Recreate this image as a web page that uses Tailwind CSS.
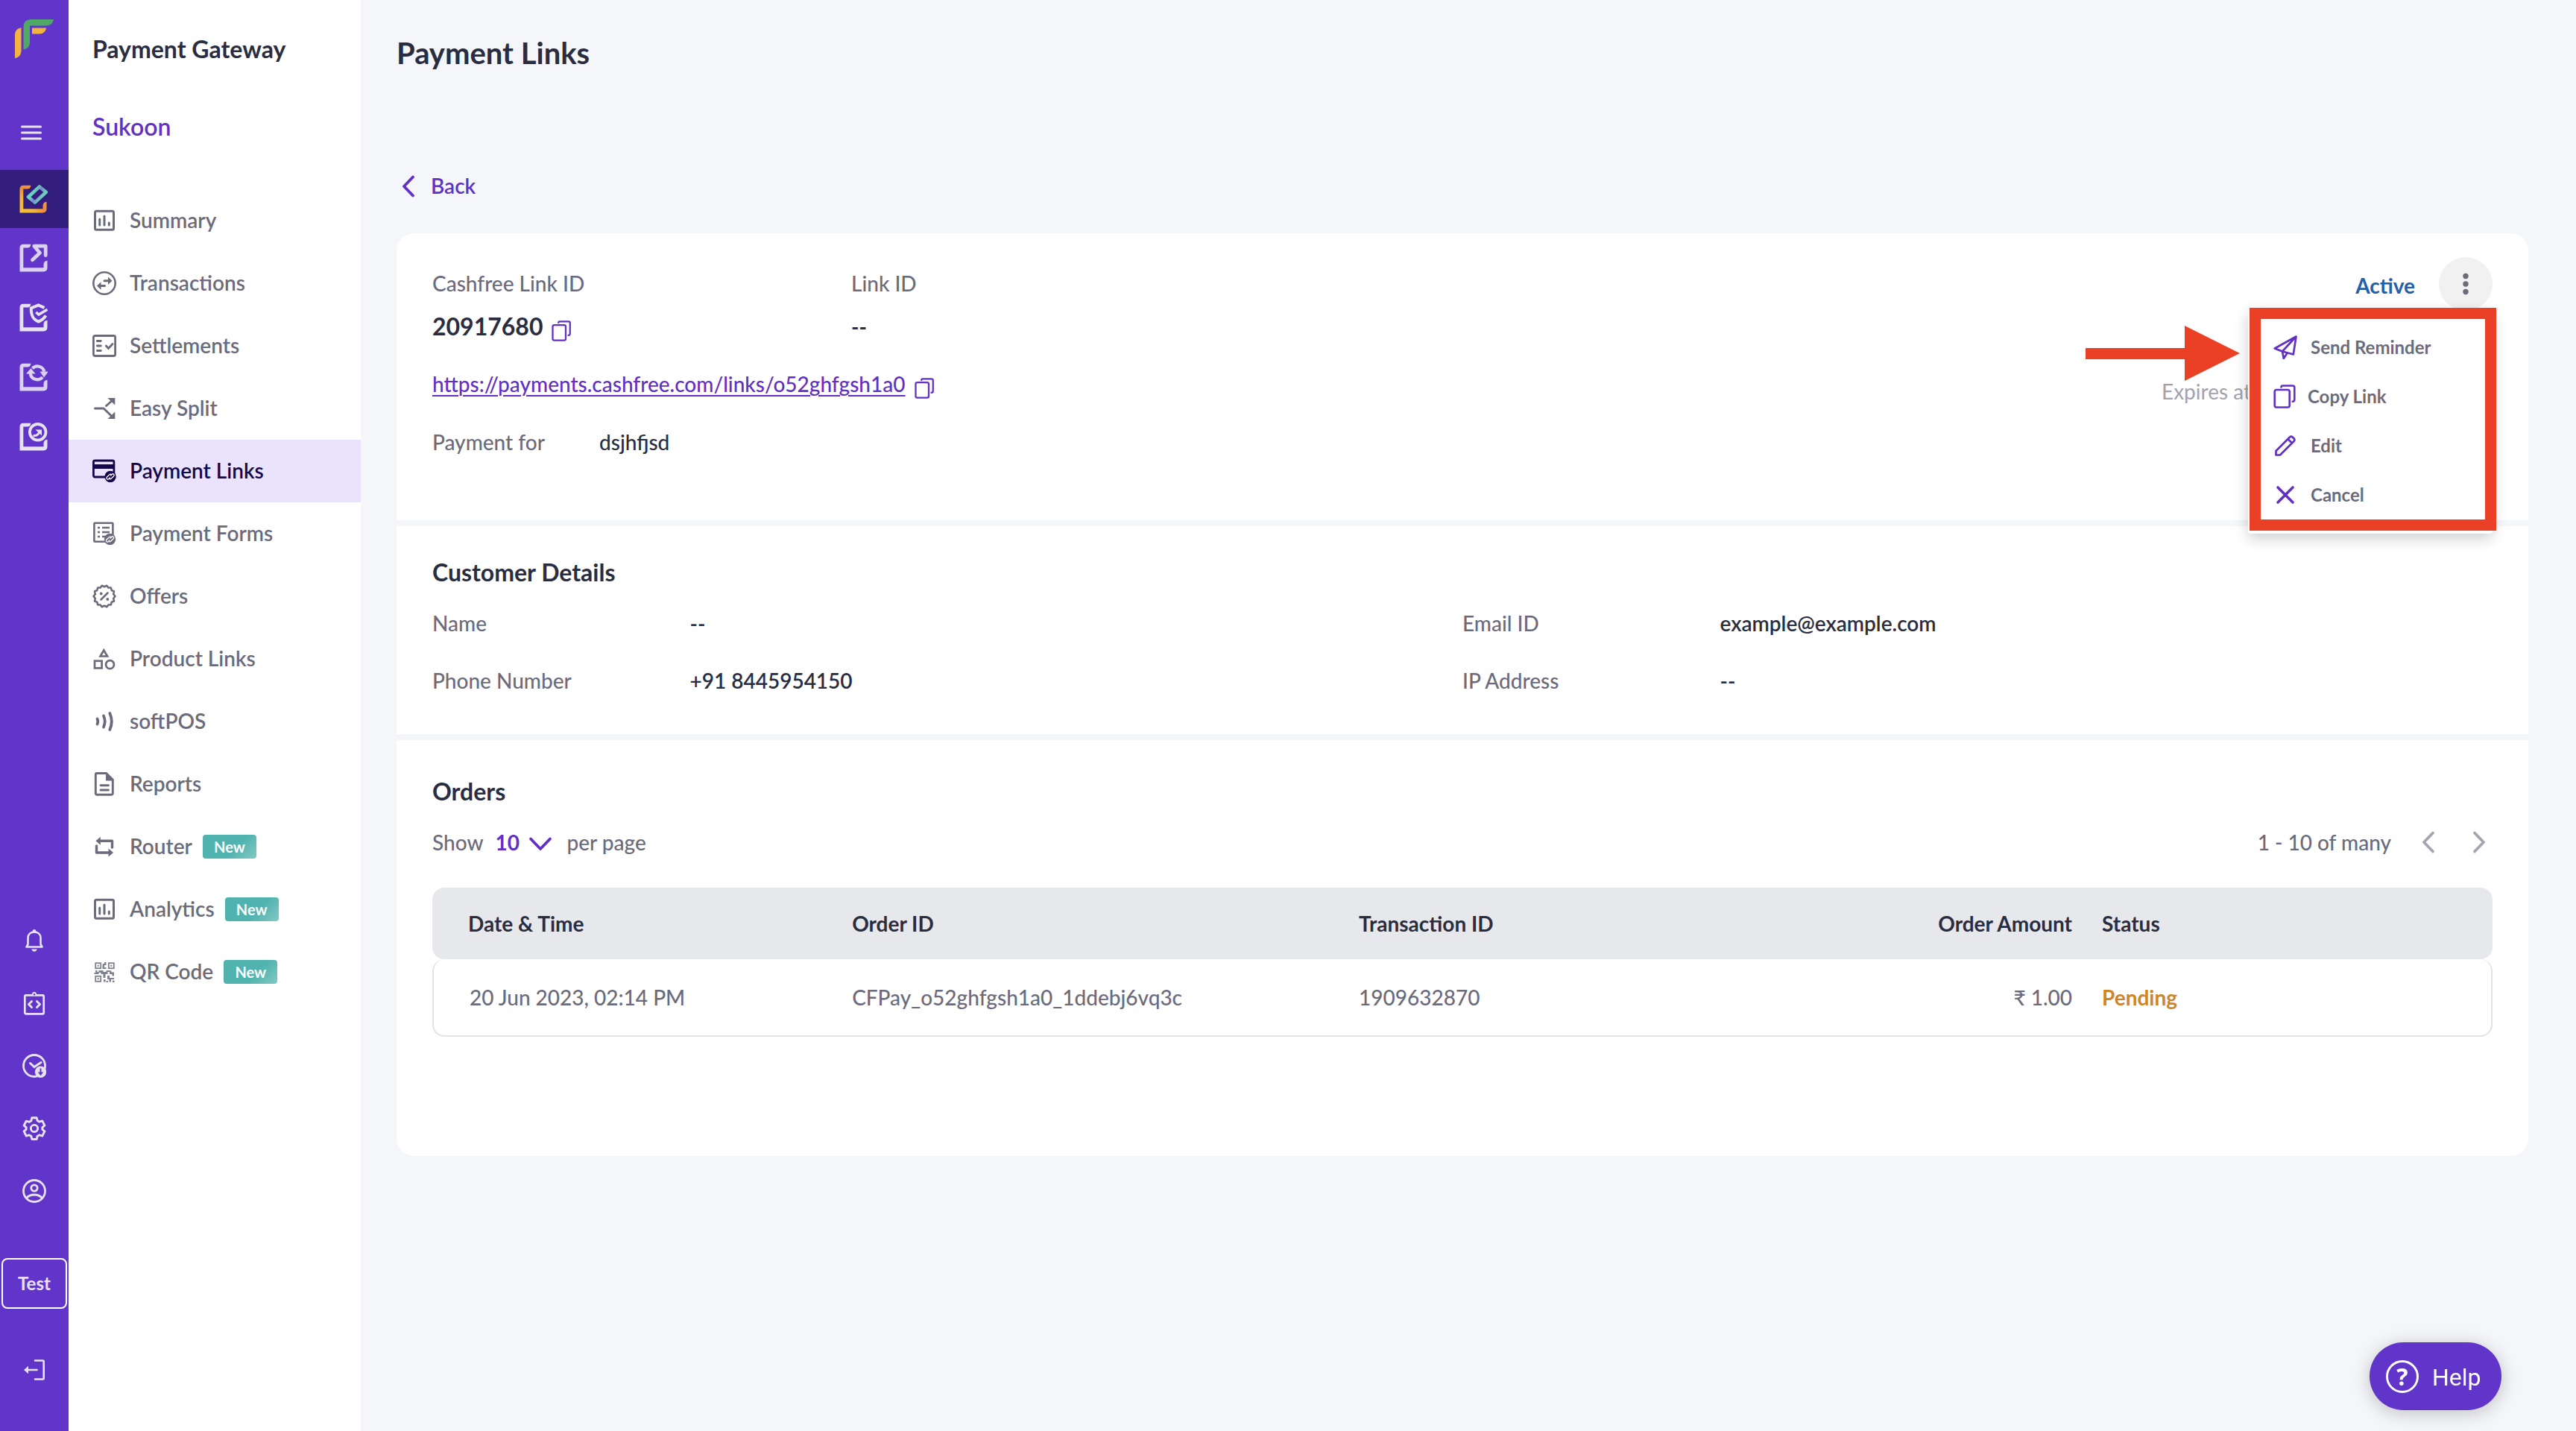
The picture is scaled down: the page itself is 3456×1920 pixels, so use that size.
<!DOCTYPE html>
<html lang="en">
<head>
<meta charset="utf-8">
<meta name="viewport" content="width=device-width, initial-scale=1">
<title>Payment Links</title>
<script src="https://cdn.jsdelivr.net/npm/@tailwindcss/browser@4"></script>
</head>
<body class="font-['Lato',sans-serif] text-[28px] leading-8 font-medium text-[#6b6b7b] bg-[#f4f6fa]">

<!-- Shared symbols -->
<svg class="hidden" aria-hidden="true">
  <symbol id="frame" viewBox="0 0 38 38"><path fill="currentColor" d="M.5 37.5V5.500C.5 2.500 2.300.7 5.200.7H15.300C15 4 13.500 5.500 10.500 5.500H5.300V32.300H32.500V28c0-3 1.800-5 5-5.200V32.300c0 3.200-1.700 5.200-5 5.200Z"/></symbol>
  <symbol id="chart" viewBox="0 0 32 32"><g fill="none" stroke="currentColor" stroke-width="3" stroke-linecap="round"><rect x="3.500" y="3.300" width="25" height="25" rx="2"/><path d="M9.700 14v8M16 10v12M22.300 19v3"/></g></symbol>
  <symbol id="linkbadge" viewBox="0 0 16 16"><circle cx="8" cy="8" r="7.700" fill="currentColor"/><g fill="none" stroke="#fff" stroke-width="1.300" stroke-linecap="round"><path d="M7.300 9.500 5.700 11.200a1.700 1.700 0 0 1-2.400-2.400L7 5.200a1.700 1.700 0 0 1 2.400 0" /><path d="M8.700 6.500 10.300 4.800a1.700 1.700 0 0 1 2.400 2.400L9 10.800a1.700 1.700 0 0 1-2.400 0"/></g></symbol>
  <symbol id="copy" viewBox="0 0 32 32"><g fill="none" stroke="currentColor" stroke-width="2.600" stroke-linecap="round" stroke-linejoin="round"><rect x="1.700" y="7" width="20" height="23.500" rx="2.500"/><path d="M10.500 3.500c0-1.300.7-2 2-2H26c1.500 0 2.300.8 2.300 2.300V20c0 1.800-.8 2.600-2.500 2.800"/></g></symbol>
  <symbol id="left" viewBox="0 0 32 32"><path d="M22 3.500 10 16l12 12.500" fill="none" stroke="currentColor" stroke-width="3.800" stroke-linecap="round" stroke-linejoin="round"/></symbol>
</svg>

<div class="flex min-h-screen">

  <!-- Product rail -->
  <nav aria-label="Products" class="flex w-[92px] shrink-0 flex-col bg-[#6134ca] text-[#e6e3ee]">
    <a href="#" aria-label="Home" class="ml-5 mt-[26px] block">
      <svg class="size-[52px]" viewBox="0 0 52 52"><path fill="#4fa865" d="M11.500 40.500V10C11.500 4 15 0 21.500 0H52c-1 5-4.500 8.500-11 8.500H20V30.500c0 5.500-3 9-8.500 10Z"/><path fill="#f2b340" d="M0 52V21c0-5.500 3-9 8.500-9.700V42C8.500 47.500 5 51.500 0 52ZM23 11.500H42c-.5 4.500-4 8-9.500 8H23Z"/></svg>
    </a>
    <button aria-label="Toggle menu" class="mt-[84px] flex h-8 items-center justify-center pr-2">
      <svg class="size-8" viewBox="0 0 32 32"><path d="M3.500 8h25M3.500 16h25M3.500 24h25" stroke="currentColor" stroke-width="3" stroke-linecap="round"/></svg>
    </button>
    <div class="mt-[34px] flex flex-col">
      <a href="#" aria-label="Payment Gateway" class="flex h-[78px] items-center justify-center bg-[#321c7c] pr-[3px]">
        <svg class="size-[38px]" viewBox="0 0 38 38">
          <defs><linearGradient id="or" x1="0" y1="1" x2="1" y2="0"><stop offset="0" stop-color="#f3c33b"/><stop offset=".3" stop-color="#f1b63a"/><stop offset=".5" stop-color="#ec8a3c"/><stop offset="1" stop-color="#f3bd3b"/></linearGradient>
          <linearGradient id="gr" x1="0" y1=".2" x2="1" y2=".8"><stop offset="0" stop-color="#61dcb4"/><stop offset=".3" stop-color="#66d2b8"/><stop offset=".5" stop-color="#7d86d2"/><stop offset=".75" stop-color="#6ccdbb"/><stop offset="1" stop-color="#61dcb4"/></linearGradient></defs>
          <path fill="url(#or)" d="M.5 37.500V5.500C.5 2.500 2.300.7 5.200.7H15.300C15 4 13.500 5.500 10.500 5.500H5.300V32.300H31.500V28c0-3 1.800-5 5-5.200V32.300c0 3.200-1.700 5.200-5 5.200Z"/>
          <path fill="none" stroke="url(#gr)" stroke-width="4.600" stroke-linejoin="round" d="M27 2.500 35.800 9.800 20.800 23.600 12 16.300Z"/>
        </svg>
      </a>
      <a href="#" aria-label="Payouts" class="flex h-20 items-center justify-center pr-[3px]">
        <svg class="size-[38px] text-[#dad2ee]" viewBox="0 0 38 38"><use href="#frame"/><path d="M17.500 21.800 27.500 12.300 19.800 3.200H35.200V15.500" fill="none" stroke="currentColor" stroke-width="4.800" stroke-linecap="round" stroke-linejoin="round"/></svg>
      </a>
      <a href="#" aria-label="Verification" class="flex h-20 items-center justify-center pr-[3px]">
        <svg class="size-[38px]" viewBox="0 0 38 38"><use href="#frame"/><g fill="none" stroke="currentColor" stroke-width="4"><path d="M33.500 5.800 25.500 2.500 15.800 6.300C15.500 16 18 21.500 25.500 24.500 30 23 33 20 35.500 16.300"/><path d="M22.300 11.800 26 15 37.500 8.300" stroke-width="3.600"/></g></svg>
      </a>
      <a href="#" aria-label="Subscriptions" class="flex h-20 items-center justify-center pr-[3px]">
        <svg class="size-[38px] text-[#dad2ee]" viewBox="0 0 38 38"><use href="#frame"/><path d="M17.500 7.300A9.300 9.300 0 0 1 33.300 11.500M31 19A9.300 9.300 0 0 1 14.700 14" fill="none" stroke="currentColor" stroke-width="4.200"/><path fill="currentColor" d="M9 14.500 15.500 7l6 7.500ZM27.500 11.500H39L33 19.500Z"/></svg>
      </a>
      <a href="#" aria-label="Credit" class="flex h-20 items-center justify-center pr-[3px]">
        <svg class="size-[38px]" viewBox="0 0 38 38"><use href="#frame"/><circle cx="24.700" cy="12.800" r="10.800" fill="#6134ca" stroke="currentColor" stroke-width="3.800"/><path d="M18.500 17.500c3.500.5 6-.5 8-4" fill="none" stroke="currentColor" stroke-width="3"/><path fill="currentColor" d="M21.500 9.500h8.500v8Z"/></svg>
      </a>
    </div>

    <div class="mt-auto flex flex-col pb-10">
      <button aria-label="Notifications" class="flex h-21 items-center justify-center">
        <svg class="size-8" viewBox="0 0 32 32"><path d="M5.500 24.500h21L24.500 21V12.500C24.500 7.500 21 4.500 16 4.500S7.500 7.500 7.500 12.500V21Z" fill="none" stroke="currentColor" stroke-width="2.600" stroke-linejoin="round"/><circle cx="16" cy="3.500" r="2.400" fill="currentColor"/><path fill="currentColor" d="M12.300 27.500h7.400c-.5 2-1.800 3.200-3.700 3.200s-3.200-1.200-3.700-3.200Z"/></svg>
      </button>
      <button aria-label="Developers" class="flex h-21 items-center justify-center">
        <svg class="size-8" viewBox="0 0 32 32"><g fill="none" stroke="currentColor" stroke-linejoin="round" stroke-linecap="round"><rect x="3.300" y="5.300" width="25.400" height="25" rx="1.500" stroke-width="2.700"/><path d="M12.500 13.500 8.500 17.500l4 4M19.500 13.500 23.500 17.500l-4 4" stroke-width="3"/></g><path fill="currentColor" d="M10.500 5.500c1.500-.3 2-1 2.700-2.500 1-3 4.600-3 5.600 0 .7 1.500 1.200 2.200 2.700 2.500Z"/><circle cx="16" cy="4.300" r="1.200" fill="#6134ca"/></svg>
      </button>
      <button aria-label="Scheduled reports" class="flex h-21 items-center justify-center">
        <svg class="size-8" viewBox="0 0 32 32"><circle cx="16" cy="16" r="14.500" fill="none" stroke="currentColor" stroke-width="2.800"/><path d="M10.500 12.500 16 17.500 25 11.500" fill="none" stroke="currentColor" stroke-width="3" stroke-linecap="round"/><circle cx="24.500" cy="24.300" r="7.700" fill="currentColor"/><path d="M24.500 19.500v6" stroke="#6134ca" stroke-width="2"/><path fill="#6134ca" d="M20.800 24.500h7.400l-3.700 4.700Z"/></svg>
      </button>
      <button aria-label="Settings" class="flex h-21 items-center justify-center">
        <svg class="size-8" viewBox="1 1 22 22" fill="none" stroke="currentColor" stroke-width="2"><path stroke-linejoin="round" d="M19.430 12.980c.04-.32.07-.64.07-.98 0-.34-.03-.66-.07-.98l2.110-1.650-2.120-4.320-2.860.85c-.52-.4-1.080-.73-1.690-.98L14.200 2.200H9.800l-.67 2.870c-.61.25-1.170.59-1.690.98l-2.860-.85-2.120 4.170 2.110 1.650c-.04.32-.07.65-.07.98 0 .33.03.66.07.98l-2.110 1.650 2.120 4.320 2.860-.85c.52.4 1.080.73 1.690.98l.67 2.870h4.400l.67-2.870c.61-.25 1.170-.59 1.690-.98l2.860.85 2.120-4.320Z"/><circle cx="12" cy="12" r="3.200"/></svg>
      </button>
      <button aria-label="Profile" class="flex h-21 items-center justify-center">
        <svg class="size-8" viewBox="0 0 32 32" fill="none" stroke="currentColor" stroke-width="2.800"><circle cx="16" cy="16" r="14.500"/><circle cx="16" cy="12" r="4.200"/><path d="M5.500 25.500c2.500-3 6-4.500 10.500-4.500s8 1.500 10.500 4.500"/></svg>
      </button>
      <button class="mx-0.5 mt-12 h-17 rounded-lg border-2 border-white text-2xl font-bold text-[#e9e1fa]">Test</button>
      <button aria-label="Log out" class="mt-10 flex h-21 items-center justify-center">
        <svg class="size-8" viewBox="0 0 32 32"><path d="M17 3.500h10.500c.8 0 1.200.4 1.200 1.200v22.600c0 .8-.4 1.200-1.200 1.200H17M8 16h11.500" fill="none" stroke="currentColor" stroke-width="2.600" stroke-linecap="round"/><path fill="currentColor" d="M2 16 8 10.800v10.400Z"/></svg>
      </button>
    </div>
  </nav>

  <!-- Section menu -->
  <aside class="w-[392px] shrink-0 bg-white pt-[46px]">
    <h2 class="px-8 text-[32px] leading-10 font-bold text-[#2a2d40]">Payment Gateway</h2>
    <p class="mt-16 px-8 text-[32px] leading-10 font-semibold text-[#6230c4]">Sukoon</p>
    <nav aria-label="Payment Gateway" class="mt-16 font-semibold">
      <a href="#" class="flex h-21 items-center gap-[18px] px-8"><svg class="size-8"><use href="#chart"/></svg><span class="pb-0.5">Summary</span></a>
      <a href="#" class="flex h-21 items-center gap-[18px] px-8"><svg class="size-8" viewBox="0 0 32 32"><circle cx="16" cy="16" r="14.700" fill="none" stroke="currentColor" stroke-width="2.600"/><path d="M16 12.700h7M16.500 19.500h-7" stroke="currentColor" stroke-width="3" stroke-linecap="round"/><path fill="currentColor" d="M21 7.500 26.500 12.700 21 18ZM11.500 14.300 6 19.500l5.500 5.200Z"/></svg><span class="pb-0.5">Transactions</span></a>
      <a href="#" class="flex h-21 items-center gap-[18px] px-8"><svg class="size-8" viewBox="0 0 32 32" fill="none" stroke="currentColor" stroke-width="2.800" stroke-linecap="round"><rect x="1.400" y="2.500" width="29.200" height="27" rx="2"/><path d="M6.300 9.500h5M6.300 16h5M6.300 22.500h5M18.300 16l3.200 3.500 5.500-6"/></svg><span class="pb-0.5">Settlements</span></a>
      <a href="#" class="flex h-21 items-center gap-[18px] px-8"><svg class="size-8" viewBox="0 0 32 32"><path d="M3.500 16H15L27 27.500M18.500 12.500 27 5" fill="none" stroke="currentColor" stroke-width="3" stroke-linecap="round"/><path fill="currentColor" d="M20.500 2H30.300v9.500ZM30.300 20.500V30H20.500Z"/></svg><span class="pb-0.5">Easy Split</span></a>
      <a href="#" aria-current="page" class="flex h-21 items-center gap-[18px] bg-[#ebe3fc] px-8 text-[#14074c]"><svg class="size-8" viewBox="0 0 32 32"><rect x="1.400" y="2" width="27.500" height="22" rx="2" fill="none" stroke="currentColor" stroke-width="2.800"/><path fill="currentColor" d="M1 7h28v6H1Z"/><use href="#linkbadge" x="16" y="15.500" width="16" height="16"/></svg><span class="pb-0.5">Payment Links</span></a>
      <a href="#" class="flex h-21 items-center gap-[18px] px-8"><svg class="size-8" viewBox="0 0 32 32"><rect x="2.400" y="1.800" width="25" height="25" rx="1" fill="none" stroke="currentColor" stroke-width="2.600"/><path d="M7 8h3M7 14h3M7 20h3M13 8h10M13 14h10M13 20h10" stroke="currentColor" stroke-width="2.600"/><use href="#linkbadge" x="15.500" y="15.500" width="16" height="16"/></svg><span class="pb-0.5">Payment Forms</span></a>
      <a href="#" class="flex h-21 items-center gap-[18px] px-8"><svg class="size-8" viewBox="0 0 32 32"><path d="M30.500 16 28.200 18.800 29 22.500 25.700 24 24.800 27.500 21.300 27.500 19.300 30.200 16 28.800 12.700 30.200 10.700 27.500 7.200 27.500 6.300 24 3 22.500 3.800 18.800 1.500 16 3.800 13.200 3 9.500 6.300 8 7.200 4.500 10.700 4.500 12.700 1.800 16 3.200 19.300 1.800 21.300 4.500 24.800 4.500 25.700 8 29 9.500 28.200 13.200Z" fill="none" stroke="currentColor" stroke-width="2.600" stroke-linejoin="round"/><path d="M11.500 20.500 20.500 11.500" stroke="currentColor" stroke-width="2.600" stroke-linecap="round"/><circle cx="11.700" cy="12.500" r="1.900" fill="currentColor"/><circle cx="20.300" cy="20" r="1.900" fill="currentColor"/></svg><span class="pb-0.5">Offers</span></a>
      <a href="#" class="flex h-21 items-center gap-[18px] px-8"><svg class="size-8" viewBox="0 0 32 32" fill="none" stroke="currentColor" stroke-width="2.700"><path d="M15.300 4.500 20 12.500H10.600Z"/><rect x="3" y="18.800" width="9.600" height="9.600"/><circle cx="23.500" cy="23.700" r="5.500"/></svg><span class="pb-0.5">Product Links</span></a>
      <a href="#" class="flex h-21 items-center gap-[18px] px-8"><svg class="size-8" viewBox="0 0 32 32" fill="none" stroke="currentColor" stroke-width="3.800" stroke-linecap="round"><path d="M6.500 12.500q1.600 3.500 0 7M15 8.500q3.400 7.500 0 15M23.300 5q5 11 0 22"/></svg><span class="pb-0.5">softPOS</span></a>
      <a href="#" class="flex h-21 items-center gap-[18px] px-8"><svg class="size-8" viewBox="0 0 32 32"><path d="M6 1.500h12.500L27.300 10v18.300c0 1.300-.7 2-2 2H6.300c-1.300 0-2-.7-2-2V3.300c0-1.200.6-1.800 1.700-1.800Z" fill="none" stroke="currentColor" stroke-width="2.900"/><path fill="currentColor" d="M18 1v10.500h10Z"/><path d="M11 17.700h10.500M11 24h10.500" stroke="currentColor" stroke-width="2.900" stroke-linecap="round"/></svg><span class="pb-0.5">Reports</span></a>
      <a href="#" class="flex h-21 items-center gap-[18px] px-8"><svg class="size-8" viewBox="0 0 32 32"><path d="M10 8.200h16.500V17M5.500 15v9H22" fill="none" stroke="currentColor" stroke-width="3.400" stroke-linecap="round" stroke-linejoin="round"/><path fill="currentColor" d="M4.500 8.200 10.800 2.700v11ZM28 24l-6.500-5.500v11Z"/></svg><span class="pb-0.5">Router</span><span class="-ml-1 flex h-8 w-18 items-center justify-center rounded bg-linear-135 from-[#51b3b0] from-60% to-[#82c9c3] text-xl font-bold text-white">New</span></a>
      <a href="#" class="flex h-21 items-center gap-[18px] px-8"><svg class="size-8"><use href="#chart"/></svg><span class="pb-0.5">Analytics</span><span class="-ml-1 flex h-8 w-18 items-center justify-center rounded bg-linear-135 from-[#51b3b0] from-60% to-[#82c9c3] text-xl font-bold text-white">New</span></a>
      <a href="#" class="flex h-21 items-center gap-[18px] px-8"><svg class="size-8" viewBox="0 0 32 32"><g fill="none" stroke="currentColor" stroke-width="1.800" opacity=".85"><rect x="4.200" y="4.200" width="7" height="7"/><rect x="21.800" y="4.200" width="7" height="7"/><rect x="4.200" y="21.800" width="7" height="7"/></g><path opacity=".85" fill="currentColor" d="M6.700 6.700h2v2h-2zM24.300 6.700h2v2h-2zM6.700 24.300h2v2h-2zM14 5h2v-2h2.500v4H16v3h2.500v2h-5V7zM3.500 14h3v2h2v-2h6v2h4v-2h5v2h-3v3h-3v5h-3v-5h-3v-2h-3v2h-6v-2h2zM23 14.500h2.500v2H29v5h-2.500v-2.500H23zM20 21h3v3h6v2h-4v3.500h-2.500V26H20zM15 26h2.500v3.500H15zM27 27.500h2.500V30H27zM18.500 28h2.500v2h-2.500z"/></svg><span class="pb-0.5">QR Code</span><span class="-ml-1 flex h-8 w-18 items-center justify-center rounded bg-linear-135 from-[#51b3b0] from-60% to-[#82c9c3] text-xl font-bold text-white">New</span></a>
    </nav>
  </aside>

  <!-- Page content -->
  <main class="min-w-0 flex-1 pt-[46px] pr-16 pb-16 pl-12">
    <h1 class="text-[40px] leading-[50px] font-bold text-[#2a2d40]">Payment Links</h1>
    <a href="#" class="mt-[138px] flex h-8 w-fit items-center gap-[14px] font-semibold text-[#6230c4]"><svg class="size-8"><use href="#left"/></svg><span class="pb-0.5">Back</span></a>

    <div class="mt-[47px] flex flex-col gap-2">
      <!-- Link summary -->
      <section class="flex justify-between rounded-t-3xl bg-white px-12 pb-[89px]">
        <div class="pt-[51px]">
          <dl class="grid grid-cols-[562px_auto]">
            <div>
              <dt>Cashfree Link ID</dt>
              <dd class="mt-[22px] flex items-end gap-3 text-[32px] leading-10 font-bold text-[#2a2d40]">20917680<button aria-label="Copy Cashfree link ID" class="text-[#6230c4]"><svg class="size-7"><use href="#copy"/></svg></button></dd>
            </div>
            <div>
              <dt>Link ID</dt>
              <dd class="mt-[22px] leading-10 font-bold text-[#2a2d40]">--</dd>
            </div>
          </dl>
          <div class="mt-[37px] flex h-10 items-end gap-3 text-[#6230c4]">
            <a href="#" class="self-center underline decoration-2 underline-offset-4">https://payments.cashfree.com/links/o52ghfgsh1a0</a>
            <button aria-label="Copy payment link"><svg class="size-7"><use href="#copy"/></svg></button>
          </div>
          <dl class="mt-[42px] flex">
            <dt class="w-56">Payment for</dt>
            <dd class="text-[#2a2d40]">dsjhfjsd</dd>
          </dl>
        </div>

        <div class="w-[444px] pt-8">
          <div class="relative flex items-center justify-end gap-8">
            <span class="pt-1 font-bold text-[#2160ab]">Active</span>
            <button aria-label="More actions" aria-expanded="true" class="flex size-18 items-center justify-center rounded-full bg-[#f1f1f2]"><svg class="size-8" viewBox="0 0 32 32" fill="currentColor"><circle cx="16" cy="5.500" r="3.700"/><circle cx="16" cy="16" r="3.700"/><circle cx="16" cy="26.500" r="3.700"/></svg></button>

            <!-- Actions menu with its highlight frame and arrow -->
            <div class="absolute top-[70px] right-0 z-10 w-[328px] rounded bg-white pt-[18px] pb-[19px] pl-[34px] text-2xl font-bold shadow-[0_6px_20px_rgba(0,0,0,0.2)]">
              <button class="flex h-[66px] w-full items-center gap-[18px]"><svg class="size-8 text-[#6230c4]" viewBox="0 0 32 32" fill="none" stroke="currentColor" stroke-width="2.700" stroke-linejoin="round"><path d="M30.500 1.500 1.800 17.500 12 21.500 26.800 25.500ZM30.500 1.500 12 21.500 13.800 31 18.500 23.700"/></svg>Send Reminder</button>
              <button class="flex h-[66px] w-full items-center gap-[14px]"><svg class="size-8 text-[#6230c4]"><use href="#copy"/></svg>Copy Link</button>
              <button class="flex h-[66px] w-full items-center gap-[18px]"><svg class="size-8 text-[#6230c4]" viewBox="0 0 32 32" fill="none" stroke="currentColor" stroke-width="2.700" stroke-linejoin="round"><path d="M3.500 28.500V23L22 4.500c1.300-1.200 2.500-1.200 3.700 0l1.800 1.800c1.200 1.200 1.200 2.500 0 3.700L9 28.500ZM19.500 7l5.500 5.500"/></svg>Edit</button>
              <button class="flex h-[66px] w-full items-center gap-[18px]"><svg class="size-8 text-[#6230c4]" viewBox="0 0 32 32" fill="none" stroke="currentColor" stroke-width="3.600" stroke-linecap="round"><path d="M6 6 26 26M26 6 6 26"/></svg>Cancel</button>
              <div class="pointer-events-none absolute -top-0.5 -right-[5px] bottom-1 left-0.5 border-[15px] border-[#ea4026]"></div>
              <svg class="pointer-events-none absolute top-[22px] -left-[218px] h-[74px] w-[207px]" viewBox="0 0 207 74"><path fill="#ea4026" d="M0 30H133V0L207 37 133 74V45H0Z"/></svg>
            </div>
          </div>
          <p class="mt-[92px] font-normal text-[#a3a2ac]">Expires at</p>
        </div>
      </section>

      <!-- Customer details -->
      <section class="bg-white px-12 pt-[42px] pb-14">
        <h2 class="text-[32px] leading-10 font-bold text-[#2a2d40]">Customer Details</h2>
        <dl class="mt-8 grid grid-cols-[1fr_3fr_1fr_3fr] gap-y-[45px]">
          <dt>Name</dt><dd class="font-semibold text-[#2a2d40]">--</dd>
          <dt>Email ID</dt><dd class="font-semibold text-[#2a2d40]">example@example.com</dd>
          <dt>Phone Number</dt><dd class="font-semibold text-[#2a2d40]">+91 8445954150</dd>
          <dt>IP Address</dt><dd class="font-semibold text-[#2a2d40]">--</dd>
        </dl>
      </section>

      <!-- Orders -->
      <section class="rounded-b-3xl bg-white px-12 pt-[49px] pb-40">
        <h2 class="text-[32px] leading-10 font-bold text-[#2a2d40]">Orders</h2>
        <div class="mt-8 flex h-8 items-center justify-between">
          <div class="flex items-center">
            <label for="page-size">Show</label>
            <div class="relative mr-5 ml-4">
              <select id="page-size" class="w-[76px] appearance-none bg-transparent font-bold text-[#6230c4]"><option>10</option><option>25</option><option>50</option></select>
              <svg class="pointer-events-none absolute top-0.5 right-0 size-8 text-[#6230c4]" viewBox="0 0 32 32"><path d="M3 9.500 16 23 29 9.500" fill="none" stroke="currentColor" stroke-width="3.800" stroke-linecap="round" stroke-linejoin="round"/></svg>
            </div>
            <span>per page</span>
          </div>
          <div class="flex items-center gap-8">
            <span>1 - 10 of many</span>
            <button aria-label="Previous page" class="flex w-9 justify-center text-[#a5a4af]"><svg class="size-8"><use href="#left"/></svg></button>
            <button aria-label="Next page" class="flex w-9 justify-center text-[#a5a4af]"><svg class="size-8 rotate-180"><use href="#left"/></svg></button>
          </div>
        </div>
        <table class="mt-[45px] w-full table-fixed border-separate border-spacing-0 text-left">
          <colgroup><col class="w-[19.65%]"><col class="w-[24.6%]"><col class="w-[18%]"><col class="w-[18.07%]"><col></colgroup>
          <thead>
            <tr class="h-24 text-[#2a2d40]">
              <th class="rounded-l-2xl bg-[#e7e8ec] pl-12 font-bold">Date &amp; Time</th>
              <th class="bg-[#e7e8ec] px-5 font-bold">Order ID</th>
              <th class="bg-[#e7e8ec] px-5 font-bold">Transaction ID</th>
              <th class="bg-[#e7e8ec] px-5 text-right font-bold">Order Amount</th>
              <th class="rounded-r-2xl bg-[#e7e8ec] px-5 font-bold">Status</th>
            </tr>
          </thead>
          <tbody>
            <tr class="h-26">
              <td class="rounded-l-2xl border-b-2 border-l-2 border-[#e3e3e7] pl-12">20 Jun 2023, 02:14 PM</td>
              <td class="border-b-2 border-[#e3e3e7] px-5">CFPay_o52ghfgsh1a0_1ddebj6vq3c</td>
              <td class="border-b-2 border-[#e3e3e7] px-5">1909632870</td>
              <td class="border-b-2 border-[#e3e3e7] px-5 text-right">₹ 1.00</td>
              <td class="rounded-r-2xl border-r-2 border-b-2 border-[#e3e3e7] px-5 font-bold text-[#cd852c]">Pending</td>
            </tr>
          </tbody>
        </table>
      </section>
    </div>
  </main>
</div>

<button class="fixed right-[100px] bottom-7 flex h-[91px] w-[177px] items-center gap-[18px] rounded-full bg-[#6134ca] pl-[22px] font-['Roboto',sans-serif] text-[32px] leading-10 font-normal text-white shadow-[0_4px_24px_rgba(0,0,0,0.22)]">
  <span class="flex size-11 items-center justify-center rounded-full border-3 border-white font-['Noto_Sans',sans-serif] font-bold">?</span><span class="pt-0.5">Help</span>
</button>
</body>
</html>
